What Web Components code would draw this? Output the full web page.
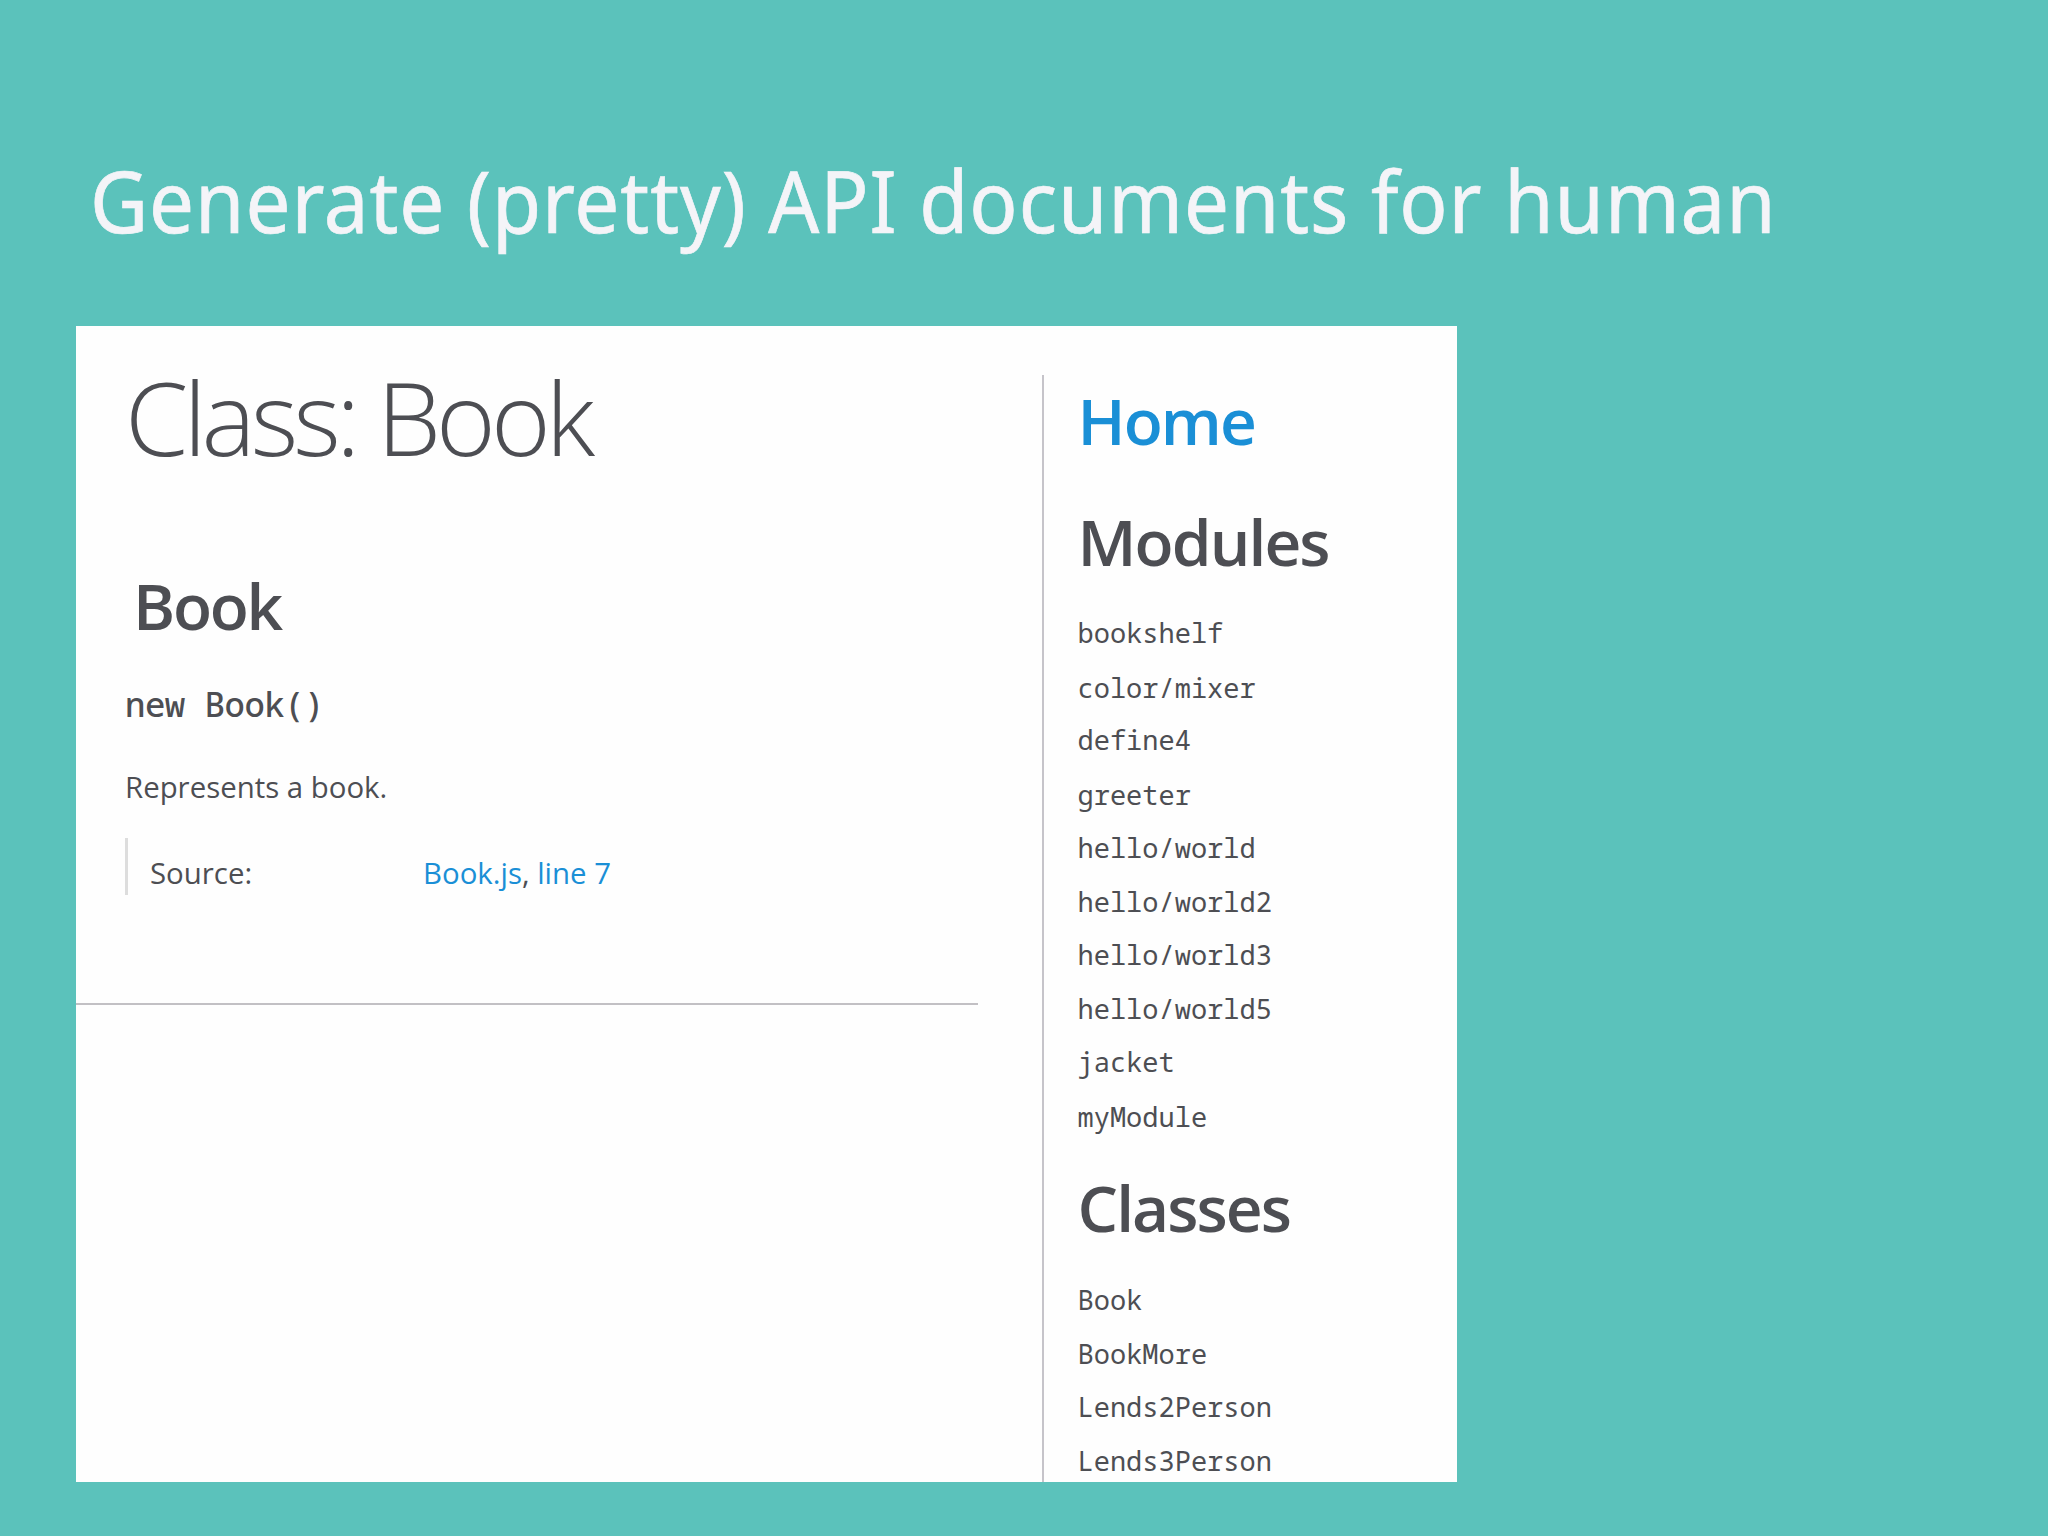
<!DOCTYPE html>
<html lang="en">
<head>
<meta charset="utf-8">
<title>Generate (pretty) API documents for human</title>
<style>
    body {
        margin: 0;
        font-family: 'Open Sans', 'Noto Sans', sans-serif;
    }
</style>
</head>
<body>
<doc-slide>
    <span slot="title">Generate (pretty) API documents for human</span>
    <doc-page>
        <doc-class name="Book" file="Book.js" line="7">Represents a book.</doc-class>
        <doc-nav slot="nav"></doc-nav>
    </doc-page>
</doc-slide>

<script>
    // slide with a title and one content area
    class DocSlide extends HTMLElement {
        constructor() {
            super()
            this.attachShadow({ mode: 'open' })
        }

        connectedCallback() {
            this.shadowRoot.innerHTML = `
      <style>
        :host {
          display: block;
          box-sizing: border-box;
          width: 2048px;
          height: 1536px;
          padding: 142px 76px 0;
          background: #5bc2bb;
          overflow: hidden;
        }

        h1 {
          margin: 0 0 68px 13.5px;
          font: 400 85px/116px 'Noto Sans', sans-serif;
          letter-spacing: 1px;
          white-space: nowrap;
          color: #f4f4f8;
          -webkit-text-stroke: 0.7px #f4f4f8;
          transform: scaleX(0.94);
          transform-origin: left;
        }
      </style>

      <h1><slot name="title"></slot></h1>
      <slot></slot>
    `
        }
    }

    // white documentation page, main column and navigation
    class DocPage extends HTMLElement {
        constructor() {
            super()
            this.attachShadow({ mode: 'open' })
        }

        connectedCallback() {
            this.shadowRoot.innerHTML = `
      <style>
        :host {
          display: flex;
          width: 1381px;
          height: 1156px;
          background: #fefefe;
          color: #4d4e53;
          overflow: hidden;
        }

        main {
          width: 902px;
          margin-right: 64px;
        }

        nav {
          flex: 1;
          margin-top: 49px;
          padding: 6.4px 0 0 33.5px;
          border-left: 2px solid #c6c4ca;
        }
      </style>

      <main><slot></slot></main>
      <nav><slot name="nav"></slot></nav>
    `
        }
    }

    class DocClass extends HTMLElement {
        constructor() {
            super()
            this.attachShadow({ mode: 'open' })
        }

        connectedCallback() {
            const name = this.getAttribute('name')

            this.shadowRoot.innerHTML = `
      <style>
        :host {
          display: block;
          padding-top: 31.2px;
          white-space: nowrap;
        }

        .body {
          padding-left: 49px;
        }

        h1 {
          margin: 0;
          font: 300 102px/120px 'Open Sans', sans-serif;
          letter-spacing: -4.9px;
        }

        h2 {
          margin: 89px 0 0 8px;
          font: 600 64px/80px 'Open Sans', sans-serif;
          letter-spacing: -2.3px;
        }

        h4 {
          margin: 37.7px 0 0;
          font: 500 34px/40px 'Noto Sans Mono', 'DejaVu Sans Mono', monospace;
          letter-spacing: -0.5px;
        }

        p {
          margin: 42.7px 0 0;
          font-size: 29.4px;
          line-height: 40px;
        }

        dl {
          display: flex;
          margin: 31.4px 0 0;
          padding: 13px 0 0 22px;
          border-left: 3px solid #ddd;
          font-size: 29.4px;
          line-height: 44px;
        }

        dt {
          width: 273px;
        }

        dd {
          margin: 0;
        }

        a {
          color: #1a8fd6;
        }

        hr {
          height: 2px;
          margin: 108.5px 0 0;
          border: 0;
          background: #c2c0c4;
        }
      </style>

      <div class="body">
        <h1>Class: ${name}</h1>
        <h2>${name}</h2>
        <h4>new ${name}()</h4>
        <p><slot></slot></p>
        <dl>
          <dt>Source:</dt>
          <dd><a>${this.getAttribute('file')}</a>, <a>line ${this.getAttribute('line')}</a></dd>
        </dl>
      </div>
      <hr>
    `
        }
    }

    class DocNav extends HTMLElement {
        constructor() {
            super()
            this.attachShadow({ mode: 'open' })

            this._groups = [
                {
                    title: 'Modules',
                    items: [
                        'bookshelf',
                        'color/mixer',
                        'define4',
                        'greeter',
                        'hello/world',
                        'hello/world2',
                        'hello/world3',
                        'hello/world5',
                        'jacket',
                        'myModule'
                    ]
                },
                {
                    title: 'Classes',
                    items: ['Book', 'BookMore', 'Lends2Person', 'Lends3Person']
                }
            ]
        }

        connectedCallback() {
            const groups = this._groups
                .map(
                    group => `
        <h3>${group.title}</h3>
        <ul>
          ${group.items.map(item => `<li>${item}</li>`).join('')}
        </ul>
      `
                )
                .join('')

            this.shadowRoot.innerHTML = `
      <style>
        :host {
          display: block;
          white-space: nowrap;
        }

        h2, h3 {
          margin: 0;
          font: 600 64px/80px 'Open Sans', sans-serif;
          letter-spacing: -1.9px;
        }

        h2 {
          margin-bottom: 40.3px;
          color: #1a8fd6;
        }

        ul {
          margin: 25.5px 0 25px;
          padding: 0;
          list-style: none;
          font: 450 27px/52.6px 'Noto Sans Mono', 'DejaVu Sans Mono', monospace;
        }

        li:nth-child(even) {
          margin-top: 2px;
        }
      </style>

      <h2>Home</h2>
      ${groups}
    `
        }
    }

    customElements.define('doc-slide', DocSlide)
    customElements.define('doc-page', DocPage)
    customElements.define('doc-class', DocClass)
    customElements.define('doc-nav', DocNav)
</script>
</body>
</html>
